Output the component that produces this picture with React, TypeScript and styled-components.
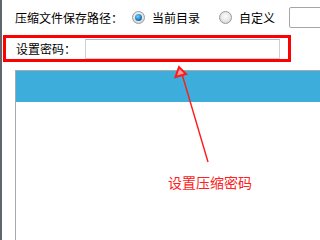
import React from 'react';
import styled, { createGlobalStyle } from 'styled-components';

const GlobalStyle = createGlobalStyle`
	html, body {
		margin: 0;
		padding: 0;
		background: #fff;
	}
	body {
		font-family: 'Noto Sans CJK SC', 'Liberation Sans', sans-serif;
		font-size: 12px;
		color: #000;
	}
`

function App() {
	return (
		<>
			<GlobalStyle />
			<Page>
				<PathRow>
					<Label>压缩文件保存路径：</Label>
					<Option $gap={9}>
						<Radio $checked />
						<span>当前目录</span>
					</Option>
					<Option $gap={19}>
						<Radio />
						<span>自定义</span>
					</Option>
					<PathInput />
				</PathRow>
				<PasswordBox>
					<Label>设置密码：</Label>
					<PasswordInput type='password' />
				</PasswordBox>
				<Panel>
					<PanelHeader />
				</Panel>
				{/* red annotation drawn over the screenshot */}
				<Arrow width='299' height='205' viewBox='0 0 299 205'>
					<line x1='182' y1='74' x2='208' y2='162' stroke='#ff1a1a' strokeWidth='1.4' />
					<polygon points='179,67 175.5,77 186,74' fill='#ff9a9a' stroke='#ff1a1a' strokeWidth='2' strokeLinejoin='miter' />
				</Arrow>
				<Note>设置压缩密码</Note>
			</Page>
		</>
	);
}

const Page = styled.div`
	position: relative;
	display: flex;
	flex-direction: column;
	height: 100vh;
	box-sizing: border-box;
	border-left: 2px solid #5f676e;
	overflow: hidden;
`

const PathRow = styled.div`
	display: flex;
	align-items: center;
	height: 35px;
	padding-left: 13px;
	white-space: nowrap;
	flex-shrink: 0;
`

const Label = styled.span`
	line-height: 16px;
	flex-shrink: 0;
`

const Option = styled.label<{ $gap: number }>`
	display: flex;
	align-items: center;
	gap: 7px;
	margin-left: ${(p) => p.$gap}px;
	flex-shrink: 0;
`

const Radio = styled.span<{ $checked?: boolean }>`
	position: relative;
	width: 13px;
	height: 13px;
	box-sizing: border-box;
	border-radius: 50%;
	border: 1px solid #9a9a9a;
	background: radial-gradient(circle at 50% 40%, #ffffff 0%, #e6e6e6 55%, #c8c8c8 100%);
	flex-shrink: 0;
	&::after {
		content: '';
		display: ${(p) => (p.$checked ? 'block' : 'none')};
		position: absolute;
		left: 2px;
		top: 2px;
		width: 7px;
		height: 7px;
		border-radius: 50%;
		background: radial-gradient(circle at 40% 35%, #7fd0ff 0%, #1b7fc4 55%, #0d4f8a 100%);
	}
`

const PathInput = styled.div`
	margin-left: 14px;
	width: 40px;
	height: 21px;
	box-sizing: border-box;
	border: 1px solid #a6a6a6;
	border-radius: 2px;
	flex-shrink: 0;
`

const PasswordBox = styled.div`
	display: flex;
	align-items: center;
	margin-left: 1px;
	width: 288px;
	height: 27px;
	box-sizing: border-box;
	border: 3px solid #ff0000;
	padding-left: 10px;
	flex-shrink: 0;
`

const PasswordInput = styled.input`
	margin: 1px 0 0 9px;
	width: 195px;
	height: 20px;
	box-sizing: border-box;
	border: 1px solid #c9d1da;
	border-top-color: #b3bcc7;
	padding: 0;
	outline: none;
	background: #fff;
`

const Panel = styled.div`
	flex: 1;
	margin: 8px 0 0 13px;
	border-top: 1px solid #a9a9a9;
	border-left: 1px solid #a9a9a9;
	background: #fff;
`

const PanelHeader = styled.div`
	height: 31px;
	background: #3daedb;
`

const Arrow = styled.svg`
	position: absolute;
	left: -2px;
	top: 0;
	pointer-events: none;
`

const Note = styled.div`
	position: absolute;
	left: 166px;
	top: 172px;
	font-size: 14px;
	line-height: 20px;
	color: #ff2020;
	white-space: nowrap;
`

export default App;
